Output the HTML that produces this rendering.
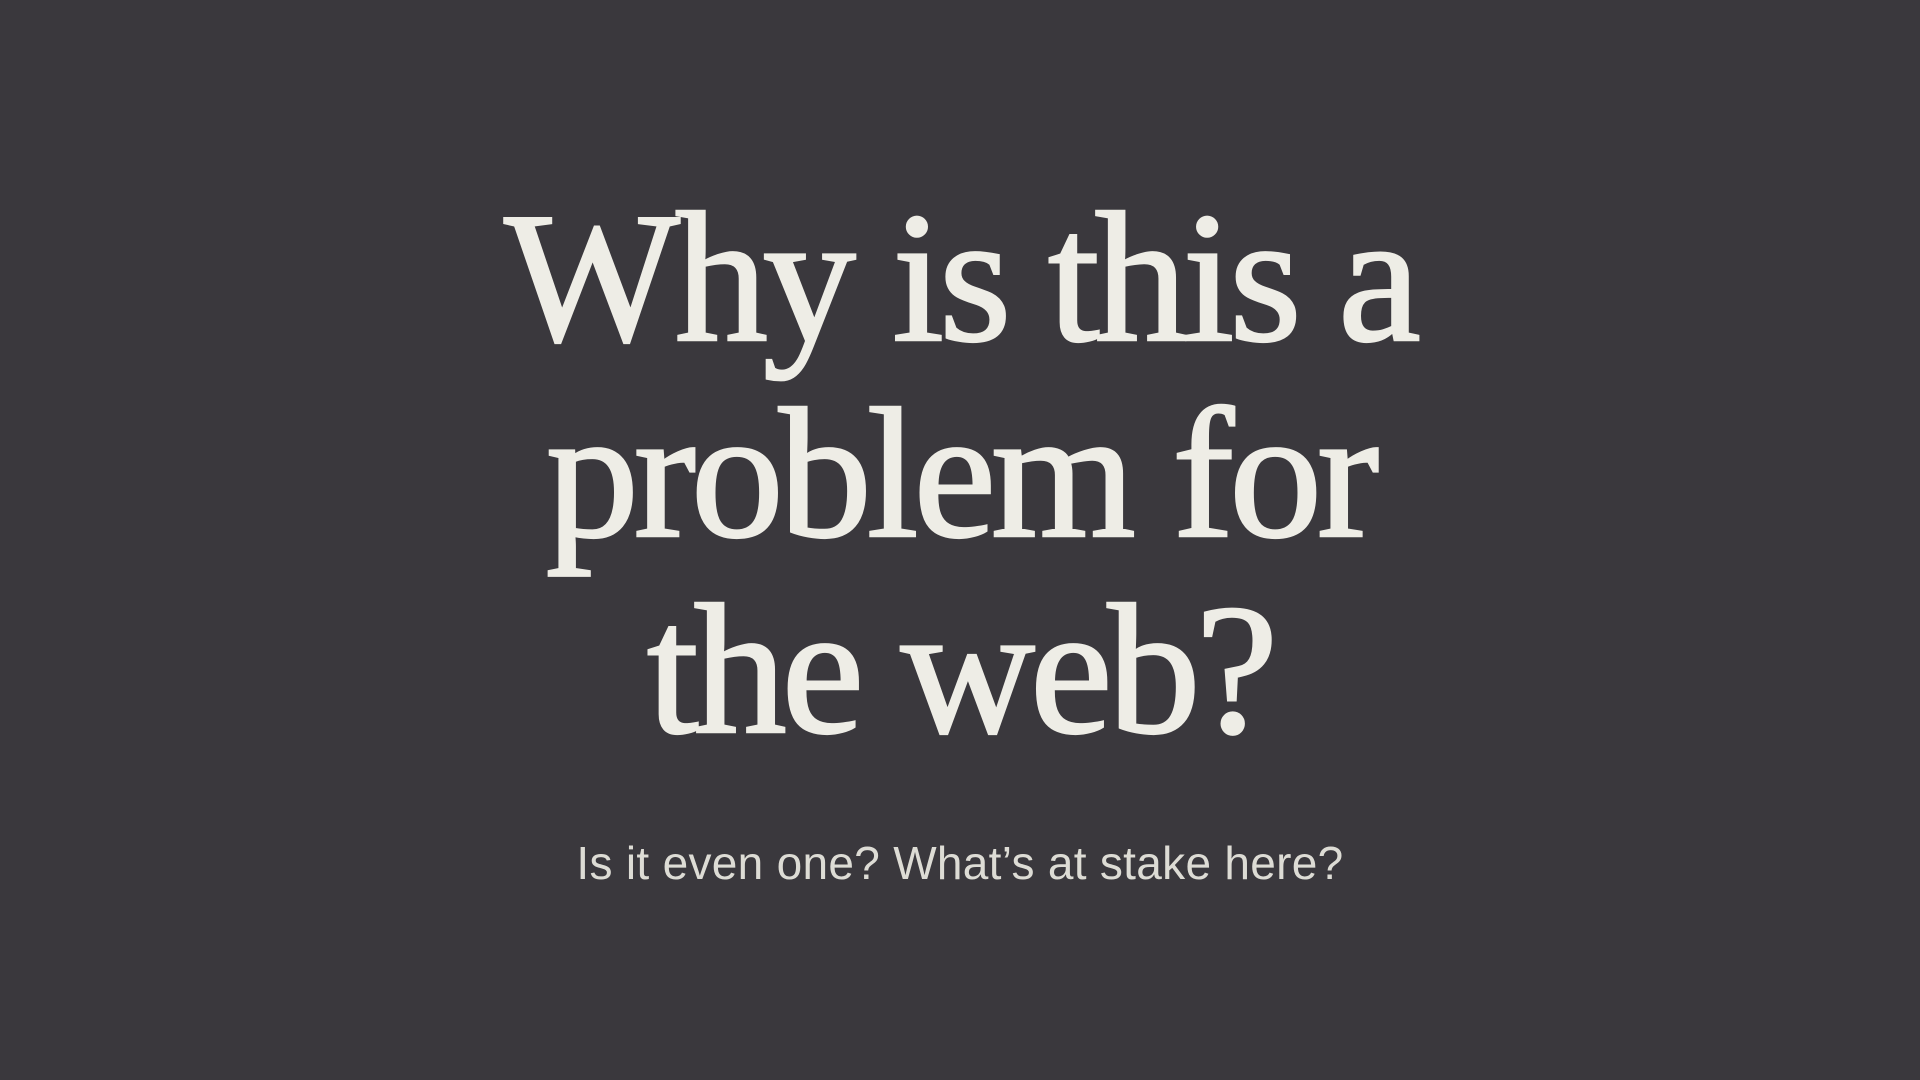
<!DOCTYPE html>
<html><head><meta charset="utf-8"><style>
html,body{margin:0;width:1920px;height:1080px;background:#3a383d;overflow:hidden}
h1{position:absolute;left:0;width:1920px;top:180px;margin:0;text-align:center;font-family:"Liberation Serif",serif;font-weight:normal;font-size:186px;line-height:196px;letter-spacing:-5px;color:#eeede6;-webkit-text-stroke:2.5px #eeede6}
p{position:absolute;left:0;width:1920px;top:833px;margin:0;text-align:center;font-family:"Liberation Sans",sans-serif;font-size:46px;line-height:60px;letter-spacing:0.3px;color:#dddcd5;font-weight:300}
</style></head><body>
<h1>Why is this a<br>problem for<br>the web?</h1>
<p>Is it even one? What’s at stake here?</p>
</body></html>
